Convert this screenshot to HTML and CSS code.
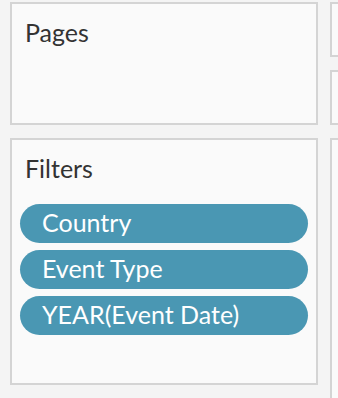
FILE: index.html
```html
<!DOCTYPE html>
<html lang="en">
<head>
  <meta charset="UTF-8">
  <title>Shelves</title>
  <link rel="stylesheet" href="styles.css">
</head>
<body>
  <div class="workspace">
    <div class="cards">
      <div class="card pages">
        <h2>Pages</h2>
      </div>
      <div class="card filters">
        <h2>Filters</h2>
        <div class="pill-list">
          <div class="pill">Country</div>
          <div class="pill">Event Type</div>
          <div class="pill">YEAR(Event Date)</div>
        </div>
      </div>
    </div>
    <div class="shelves">
      <div class="card shelf"></div>
      <div class="card shelf"></div>
      <div class="card shelf big"></div>
    </div>
  </div>
</body>
</html>
```

FILE: styles.css
```css
body {
  font-family: 'Lato', sans-serif;
  background: #f4f4f4;
  margin: 0;
  padding: 0;
  overflow: hidden;
}
.workspace {
  display: flex;
  gap: 12px;
  padding: 2px 0 0 10px;
  height: 396px;
}
.cards, .shelves {
  display: flex;
  flex-direction: column;
  gap: 13px;
}
.cards {
  width: 308px;
  flex-shrink: 0;
}
.shelves {
  flex: 1;
  min-width: 0;
}
.card {
  background: #fafafa;
  border: 2px solid #d4d4d4;
  box-sizing: border-box;
}
.pages {
  height: 123px;
}
.filters {
  height: 247px;
}
.shelf {
  height: 55px;
  border-right: none;
}
.shelf.big {
  flex: 1;
  border-bottom: none;
}
h2 {
  margin: 0;
  padding: 12px 0 0 13px;
  font-size: 25px;
  font-weight: 400;
  line-height: 32px;
  color: #333;
}
.pill-list {
  display: flex;
  flex-direction: column;
  gap: 7px;
  padding: 20px 8px 0 8px;
}
.pill {
  height: 39px;
  line-height: 36px;
  border-radius: 20px;
  background: #4a97b3;
  color: white;
  font-size: 25px;
  padding-left: 22px;
}
```
